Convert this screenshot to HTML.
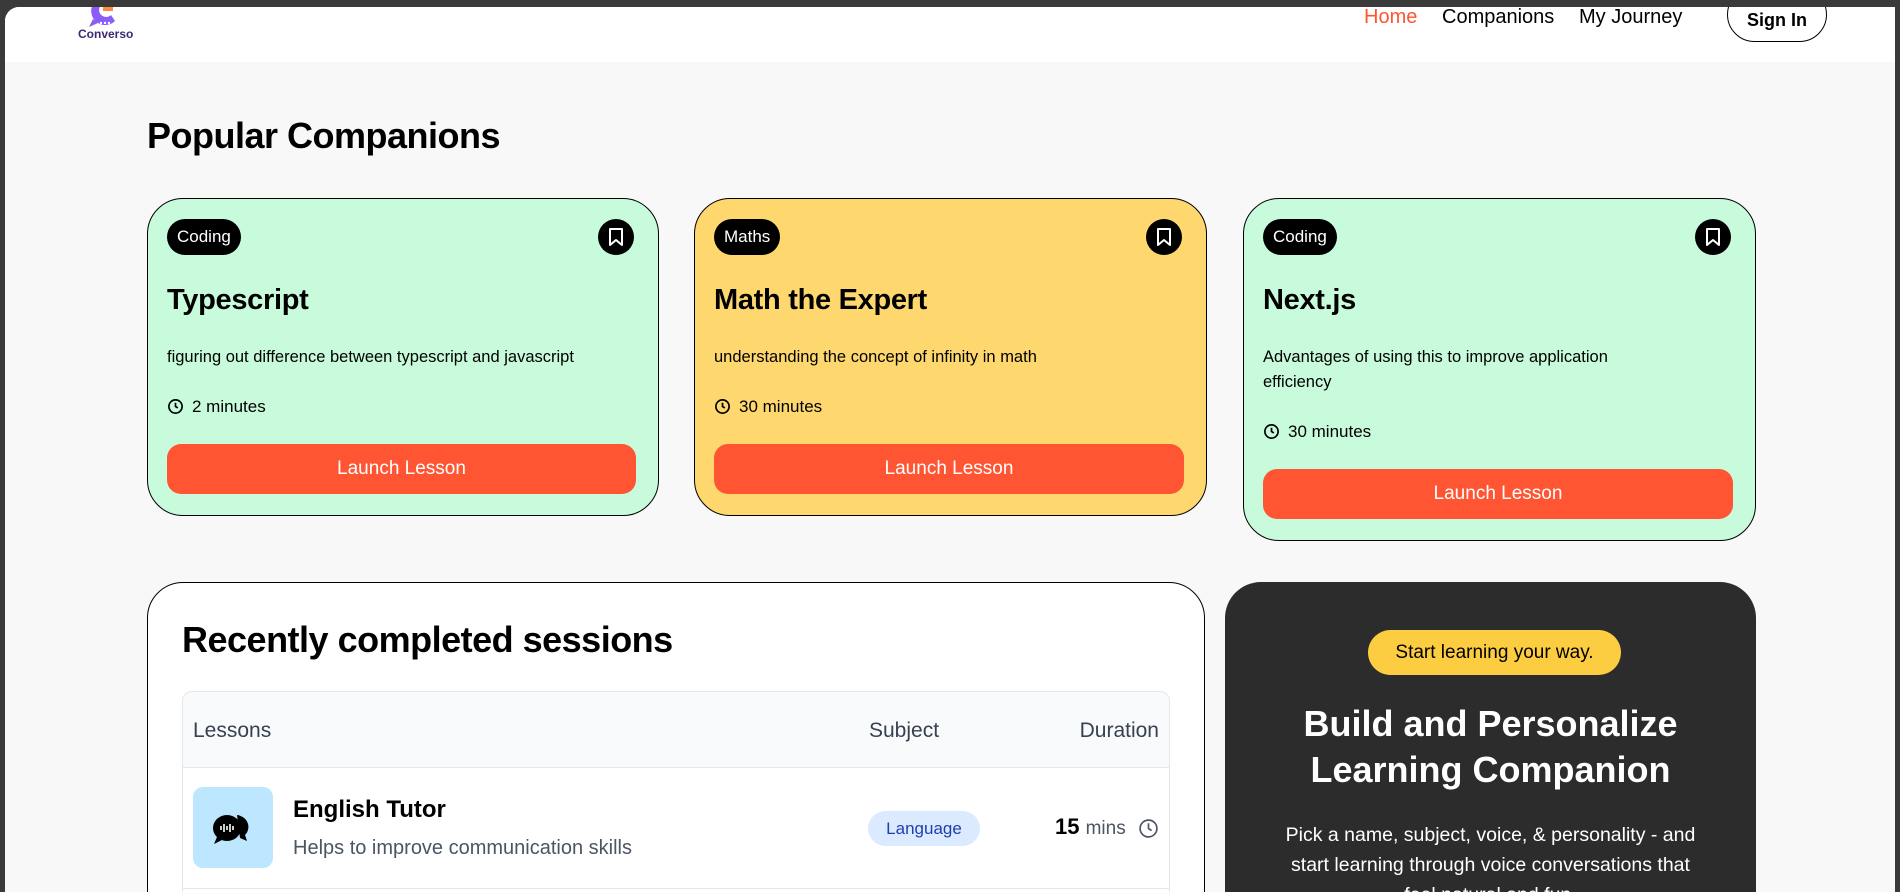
<!DOCTYPE html>
<html><head><meta charset="utf-8"><style>
*{box-sizing:border-box;margin:0;padding:0}
body{width:1900px;height:892px;overflow:hidden;background:#3a3a3a;font-family:"Liberation Sans",sans-serif;color:#000;position:relative}
.page{position:absolute;left:5px;top:7px;width:1890px;height:885px;background:#f8f8f8;border-radius:14px 0 0 0;overflow:hidden}
.nav{position:absolute;left:0;top:0;width:100%;height:55px;background:#fff}
.abs{position:absolute}
.card{position:absolute;border:1.5px solid #000;border-radius:36px}
.tag{position:absolute;left:19px;top:20px;height:36px;padding:0 10px;background:#000;color:#fff;border-radius:18px;font-size:17px;line-height:36px}
.bm{position:absolute;right:24px;top:20px;width:36px;height:36px;border-radius:50%;background:#000}
.title{position:absolute;left:19px;top:85px;font-size:29px;font-weight:bold;letter-spacing:-0.3px}
.desc{position:absolute;left:19px;top:146px;font-size:16.5px;line-height:25px;width:480px}
.dur{position:absolute;left:19px;font-size:17px}
.btn{position:absolute;left:19px;right:22px;height:50px;background:#ff5533;border-radius:14px;color:#fff;font-size:19px;text-align:center;line-height:50px}
</style></head><body>
<div class="page">
<div class="nav">
 <svg class="abs" style="left:78px;top:-12px" width="44" height="34" viewBox="0 0 44 34"><path d="M22 2a14 14 0 1 0 10 24l-4-6a7 7 0 1 1 0-10l5-5A14 14 0 0 0 22 2z" fill="#8b5cf6"/><path d="M10 24l-4 8 9-4z" fill="#8b5cf6"/><rect x="20" y="10" width="10" height="6" fill="#ff8a3d"/><circle cx="18" cy="28" r="1.2" fill="#fff"/><circle cx="22" cy="28" r="1.2" fill="#fff"/><circle cx="26" cy="28" r="1.2" fill="#fff"/></svg>
 <div class="abs" style="left:73px;top:20px;font-size:12px;font-weight:bold;color:#3b2a6e">Converso</div>
 <div class="abs" style="left:1359px;top:-1px;font-size:20px;color:#ff5533">Home</div>
 <div class="abs" style="left:1437px;top:-1px;font-size:20px">Companions</div>
 <div class="abs" style="left:1574px;top:-1px;font-size:20px">My Journey</div>
 <div class="abs" style="left:1722px;top:-20px;width:100px;height:55px;border:1.5px solid #000;border-radius:28px;text-align:center;padding-top:22px;font-size:18px;font-weight:bold">Sign In</div>
</div>
<div class="abs" style="left:142px;top:108px;font-size:36px;font-weight:bold;letter-spacing:-0.5px">Popular Companions</div>

<div class="card" style="left:142px;top:191px;width:512px;height:318px;background:#c8fbdc">
 <div class="tag">Coding</div>
 <div class="bm"><svg width="36" height="36" viewBox="0 0 36 36"><path d="M12 10h12v16l-6-5-6 5z" fill="none" stroke="#fff" stroke-width="2" stroke-linejoin="round"/></svg></div>
 <div class="title">Typescript</div>
 <div class="desc">figuring out difference between typescript and javascript</div>
 <div class="dur" style="top:198px"><svg width="17" height="17" viewBox="0 0 18 18" style="vertical-align:-3px;margin-right:8px"><circle cx="9" cy="9" r="7" fill="none" stroke="#000" stroke-width="1.8"/><path d="M9 5v4l2.5 1.5" fill="none" stroke="#000" stroke-width="1.8"/></svg>2 minutes</div>
 <div class="btn" style="top:245px">Launch Lesson</div>
</div>

<div class="card" style="left:689px;top:191px;width:513px;height:318px;background:#fed86f">
 <div class="tag">Maths</div>
 <div class="bm"><svg width="36" height="36" viewBox="0 0 36 36"><path d="M12 10h12v16l-6-5-6 5z" fill="none" stroke="#fff" stroke-width="2" stroke-linejoin="round"/></svg></div>
 <div class="title">Math the Expert</div>
 <div class="desc">understanding the concept of infinity in math</div>
 <div class="dur" style="top:198px"><svg width="17" height="17" viewBox="0 0 18 18" style="vertical-align:-3px;margin-right:8px"><circle cx="9" cy="9" r="7" fill="none" stroke="#000" stroke-width="1.8"/><path d="M9 5v4l2.5 1.5" fill="none" stroke="#000" stroke-width="1.8"/></svg>30 minutes</div>
 <div class="btn" style="top:245px">Launch Lesson</div>
</div>

<div class="card" style="left:1238px;top:191px;width:513px;height:343px;background:#c8fbdc">
 <div class="tag">Coding</div>
 <div class="bm"><svg width="36" height="36" viewBox="0 0 36 36"><path d="M12 10h12v16l-6-5-6 5z" fill="none" stroke="#fff" stroke-width="2" stroke-linejoin="round"/></svg></div>
 <div class="title">Next.js</div>
 <div class="desc">Advantages of using this to improve application<br>efficiency</div>
 <div class="dur" style="top:223px"><svg width="17" height="17" viewBox="0 0 18 18" style="vertical-align:-3px;margin-right:8px"><circle cx="9" cy="9" r="7" fill="none" stroke="#000" stroke-width="1.8"/><path d="M9 5v4l2.5 1.5" fill="none" stroke="#000" stroke-width="1.8"/></svg>30 minutes</div>
 <div class="btn" style="top:270px">Launch Lesson</div>
</div>

<div class="card" style="left:142px;top:575px;width:1058px;height:400px;background:#fff">
 <div class="abs" style="left:34px;top:36px;font-size:36px;font-weight:bold;letter-spacing:-0.5px">Recently completed sessions</div>
 <div class="abs" style="left:34px;top:108px;width:988px;height:300px;border:1.5px solid #e5e7eb;border-radius:10px;overflow:hidden">
  <div class="abs" style="left:0;top:0;width:100%;height:76px;background:#f9fafb;border-bottom:1.5px solid #e5e7eb"></div>
  <div class="abs" style="left:10px;top:27px;font-size:21px;color:#374151">Lessons</div>
  <div class="abs" style="left:686px;top:27px;font-size:21px;color:#374151">Subject</div>
  <div class="abs" style="right:10px;top:27px;font-size:21px;color:#374151">Duration</div>
  <div class="abs" style="left:10px;top:95px;width:80px;height:81px;background:#bde7ff;border-radius:10px">
   <svg width="80" height="81" viewBox="0 0 80 81"><path d="M44 28a13 12 0 0 1 8 20l2 6-7-3" fill="#000"/><ellipse cx="34" cy="41" rx="14" ry="13" fill="#000"/><path d="M24 50l-3 7 8-4z" fill="#000"/><g stroke="#fff" stroke-width="1.6"><path d="M28 39v4M31 37v8M34 39v4M37 37v8M40 39v4"/></g></svg>
  </div>
  <div class="abs" style="left:110px;top:104px;font-size:24px;font-weight:bold">English Tutor</div>
  <div class="abs" style="left:110px;top:145px;font-size:20px;color:#4b5563">Helps to improve communication skills</div>
  <div class="abs" style="left:685px;top:119px;width:112px;height:35px;background:#dbeafe;border-radius:18px;text-align:center;line-height:35px;font-size:17px;color:#1e40af">Language</div>
  <div class="abs" style="left:872px;top:122px;font-size:22px"><b>15</b> <span style="font-size:19px;color:#4b5563">mins</span></div>
  <svg class="abs" style="left:955px;top:126px" width="21" height="21" viewBox="0 0 20 20"><circle cx="10" cy="10" r="8" fill="none" stroke="#4b5563" stroke-width="1.6"/><path d="M10 5v5l3 2" fill="none" stroke="#4b5563" stroke-width="1.6"/></svg>
  <div class="abs" style="left:0;top:196px;width:100%;border-top:1.5px solid #e5e7eb"></div>
 </div>
</div>

<div class="abs" style="left:1220px;top:575px;width:531px;height:400px;background:#2c2c2c;border-radius:36px">
 <div class="abs" style="left:143px;top:48px;width:253px;height:45px;background:#fccc41;border-radius:23px;text-align:center;line-height:45px;font-size:19px">Start learning your way.</div>
 <div class="abs" style="left:0;top:119px;width:100%;text-align:center;color:#fff;font-size:36px;font-weight:bold;line-height:46px">Build and Personalize<br>Learning Companion</div>
 <div class="abs" style="left:50px;top:238px;width:431px;text-align:center;color:#fff;font-size:19.5px;line-height:30px">Pick a name, subject, voice, &amp; personality - and start learning through voice conversations that feel natural and fun.</div>
</div>
</div>
</body></html>
